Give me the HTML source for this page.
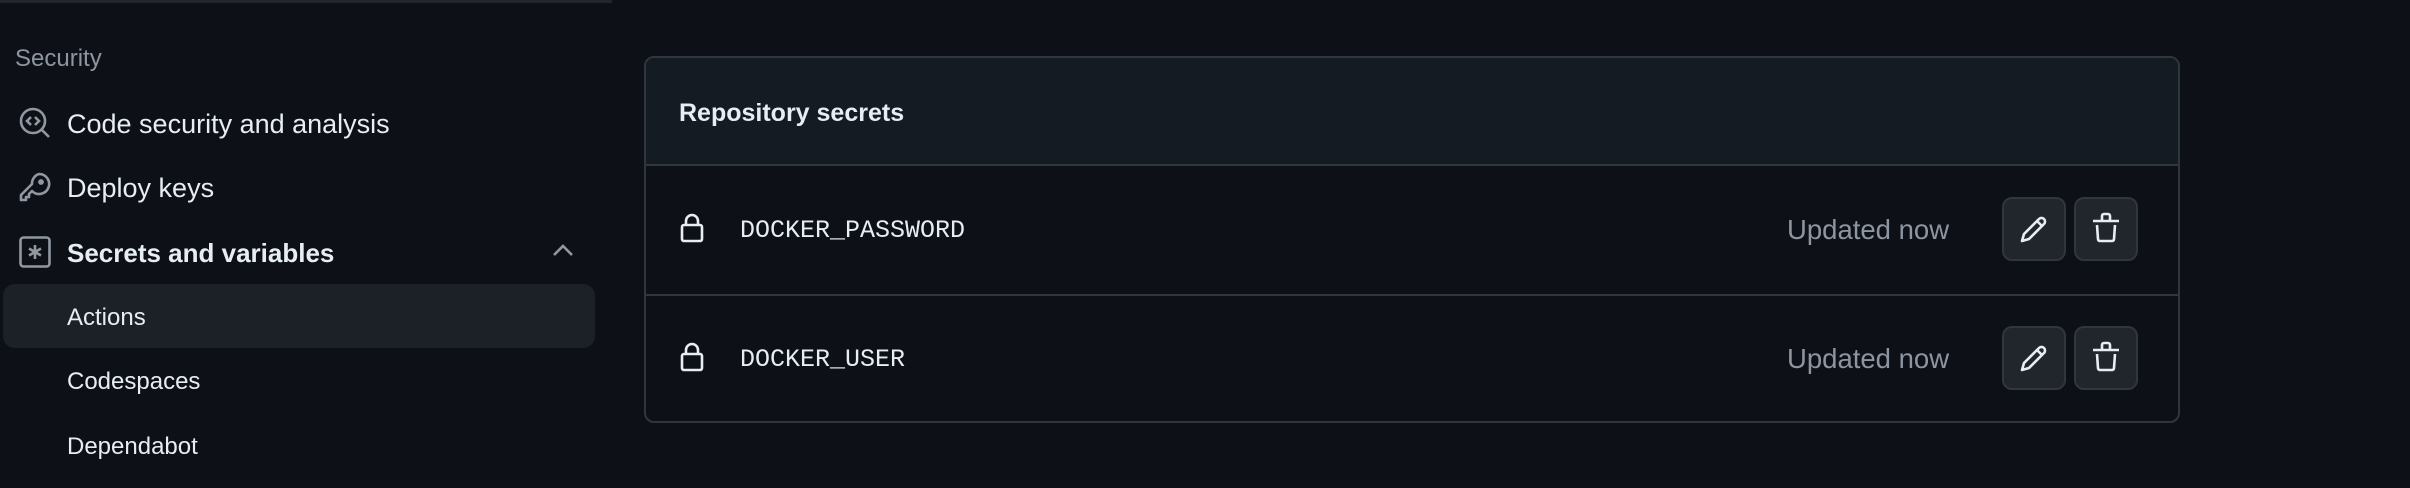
<!DOCTYPE html>
<html><head><style>
*{margin:0;padding:0;box-sizing:border-box}
body{width:2410px;height:488px;background:#0d1117;font-family:"Liberation Sans",sans-serif;color:#e6edf3;position:relative;overflow:hidden}
.a{position:absolute}
.nav{font-size:27px;color:#e6edf3;line-height:1}
.sub{font-size:24px;color:#e6edf3;line-height:1}
.mono{font-family:"Liberation Mono",monospace;font-size:25px;color:#e6edf3}
.upd{font-size:27.5px;color:#8d96a0}
.btn{position:absolute;width:64px;height:64px;border:2px solid #30363d;border-radius:10px;background:#21262d}
svg{position:absolute}
</style></head><body>
<div class="a" style="left:0;top:0;width:612px;height:3px;background:#21262d"></div>
<div class="a" style="left:15px;top:45px;font-size:24px;color:#8d96a0">Security</div>

<svg style="left:19px;top:107px" width="32" height="32" viewBox="0 0 32 32" fill="none" stroke="#9198a1" stroke-width="2.6"><circle cx="14" cy="14" r="12"/><path d="M23 23l7 7"/><path d="M12 10l-4 4 4 4M16 10l4 4-4 4"/></svg>
<div class="a nav" style="left:67px;top:111px">Code security and analysis</div>

<svg style="left:19px;top:172px" width="32" height="32" viewBox="0 0 32 32" fill="none" stroke="#9198a1" stroke-width="2.6" stroke-linejoin="round"><path d="M20 2a10 10 0 1 1-7 17l-3 3v3H7v3H2v-5l11-11A10 10 0 0 1 20 2z"/><circle cx="22" cy="10" r="1.6" fill="#9198a1"/></svg>
<div class="a nav" style="left:67px;top:175px">Deploy keys</div>

<svg style="left:19px;top:236px" width="32" height="32" viewBox="0 0 32 32" fill="none" stroke="#9198a1" stroke-width="2.6"><rect x="1.5" y="1.5" width="29" height="29" rx="3"/><path d="M16 9v14M10 12.5l12 7M22 12.5l-12 7"/></svg>
<div class="a nav" style="left:67px;top:240px;font-weight:bold;font-size:26px">Secrets and variables</div>
<svg style="left:552px;top:242px" width="22" height="16" viewBox="0 0 22 16" fill="none" stroke="#9198a1" stroke-width="2.6"><path d="M2 13l9-9 9 9"/></svg>

<div class="a" style="left:3px;top:284px;width:592px;height:64px;background:#1c2128;border-radius:12px"></div>
<div class="a sub" style="left:67px;top:306px">Actions</div>
<div class="a sub" style="left:67px;top:370px">Codespaces</div>
<div class="a sub" style="left:67px;top:435px">Dependabot</div>

<div class="a" style="left:644px;top:56px;width:1536px;height:367px;border:2px solid #30363d;border-radius:10px;overflow:hidden">
  <div class="a" style="left:0;top:0;width:100%;height:108px;background:#151b23;border-bottom:2px solid #30363d"></div>
  <div class="a" style="left:33px;top:41px;font-size:25px;font-weight:bold">Repository secrets</div>
  <div class="a" style="left:0;top:236px;width:100%;height:2px;background:#30363d"></div>
</div>

<svg style="left:680px;top:213px" width="24" height="30" viewBox="0 0 24 30" fill="none" stroke="#e6edf3" stroke-width="2.6"><rect x="2" y="12" width="20" height="16" rx="2"/><path d="M6 12V8a6 6 0 0 1 12 0v4"/></svg>
<div class="a mono" style="left:740px;top:216px">DOCKER_PASSWORD</div>
<div class="a upd" style="left:1787px;top:214px">Updated now</div>
<div class="btn" style="left:2002px;top:197px"></div>
<div class="btn" style="left:2074px;top:197px"></div>

<svg style="left:680px;top:342px" width="24" height="30" viewBox="0 0 24 30" fill="none" stroke="#e6edf3" stroke-width="2.6"><rect x="2" y="12" width="20" height="16" rx="2"/><path d="M6 12V8a6 6 0 0 1 12 0v4"/></svg>
<div class="a mono" style="left:740px;top:345px">DOCKER_USER</div>
<div class="a upd" style="left:1787px;top:343px">Updated now</div>
<div class="btn" style="left:2002px;top:326px"></div>
<div class="btn" style="left:2074px;top:326px"></div>

<svg style="left:2019px;top:214px" width="30" height="30" viewBox="0 0 30 30" fill="none" stroke="#e6edf3" stroke-width="2.6" stroke-linejoin="round"><path d="M3 27l2-7L20 5a3 3 0 0 1 5 5L10 25z"/><path d="M18 7l5 5"/></svg>
<svg style="left:2092px;top:212px" width="28" height="32" viewBox="0 0 28 32" fill="none" stroke="#e6edf3" stroke-width="2.6" stroke-linejoin="round"><path d="M1 9h26M10 9V4a2 2 0 0 1 2-2h4a2 2 0 0 1 2 2v5M5 13l1 14a2 2 0 0 0 2 2h12a2 2 0 0 0 2-2l1-14"/></svg>
<svg style="left:2019px;top:343px" width="30" height="30" viewBox="0 0 30 30" fill="none" stroke="#e6edf3" stroke-width="2.6" stroke-linejoin="round"><path d="M3 27l2-7L20 5a3 3 0 0 1 5 5L10 25z"/><path d="M18 7l5 5"/></svg>
<svg style="left:2092px;top:341px" width="28" height="32" viewBox="0 0 28 32" fill="none" stroke="#e6edf3" stroke-width="2.6" stroke-linejoin="round"><path d="M1 9h26M10 9V4a2 2 0 0 1 2-2h4a2 2 0 0 1 2 2v5M5 13l1 14a2 2 0 0 0 2 2h12a2 2 0 0 0 2-2l1-14"/></svg>
</body></html>
